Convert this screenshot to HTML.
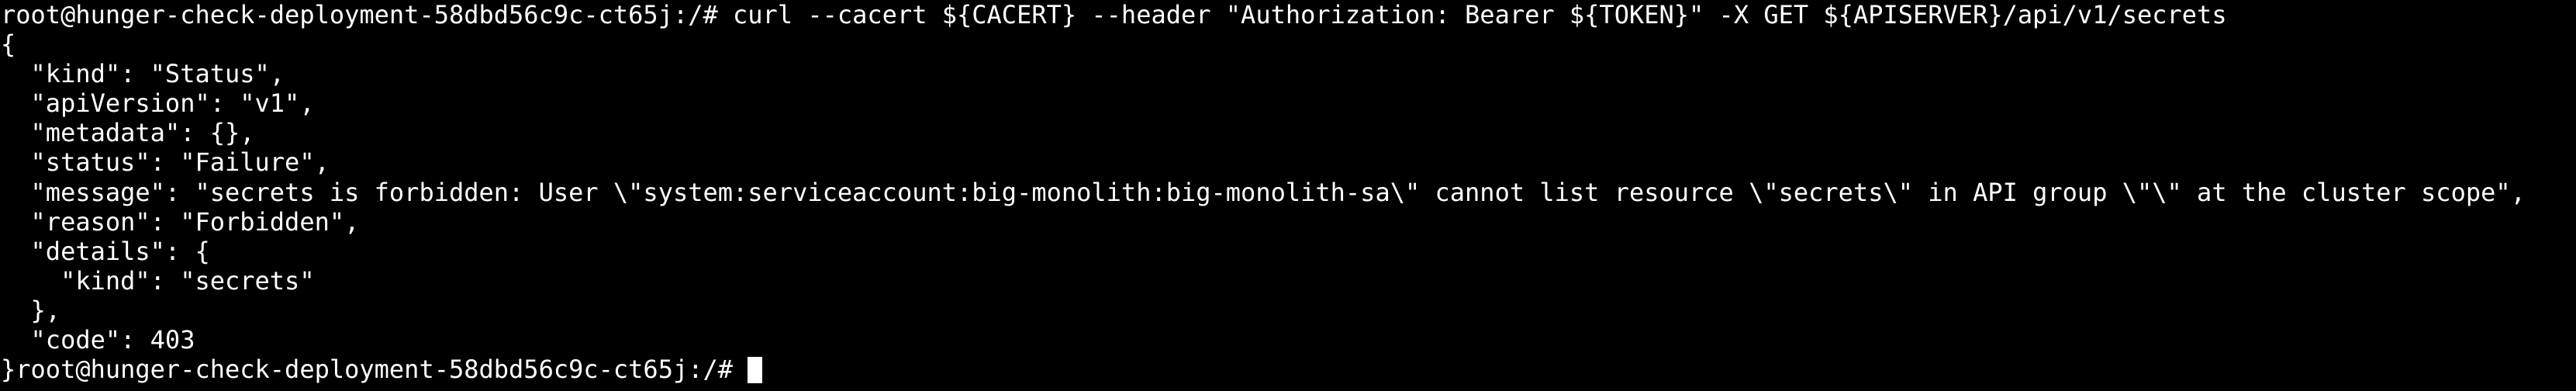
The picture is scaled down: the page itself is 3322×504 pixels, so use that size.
<!DOCTYPE html>
<html><head><meta charset="utf-8"><style>
html,body{margin:0;padding:0;background:#000;width:3322px;height:504px;overflow:hidden}
pre{margin:0;padding:0 0 0 1px;font-family:"DejaVu Sans Mono","Liberation Mono",monospace;font-size:32px;line-height:38.1px;color:#fff;white-space:pre}
.c{display:inline-block;width:19px;height:34px;background:#fff;vertical-align:-7px}
</style></head><body><pre>root@hunger-check-deployment-58dbd56c9c-ct65j:/# curl --cacert ${CACERT} --header "Authorization: Bearer ${TOKEN}" -X GET ${APISERVER}/api/v1/secrets
{
  "kind": "Status",
  "apiVersion": "v1",
  "metadata": {},
  "status": "Failure",
  "message": "secrets is forbidden: User \"system:serviceaccount:big-monolith:big-monolith-sa\" cannot list resource \"secrets\" in API group \"\" at the cluster scope",
  "reason": "Forbidden",
  "details": {
    "kind": "secrets"
  },
  "code": 403
}root@hunger-check-deployment-58dbd56c9c-ct65j:/# <span class="c"></span></pre></body></html>
